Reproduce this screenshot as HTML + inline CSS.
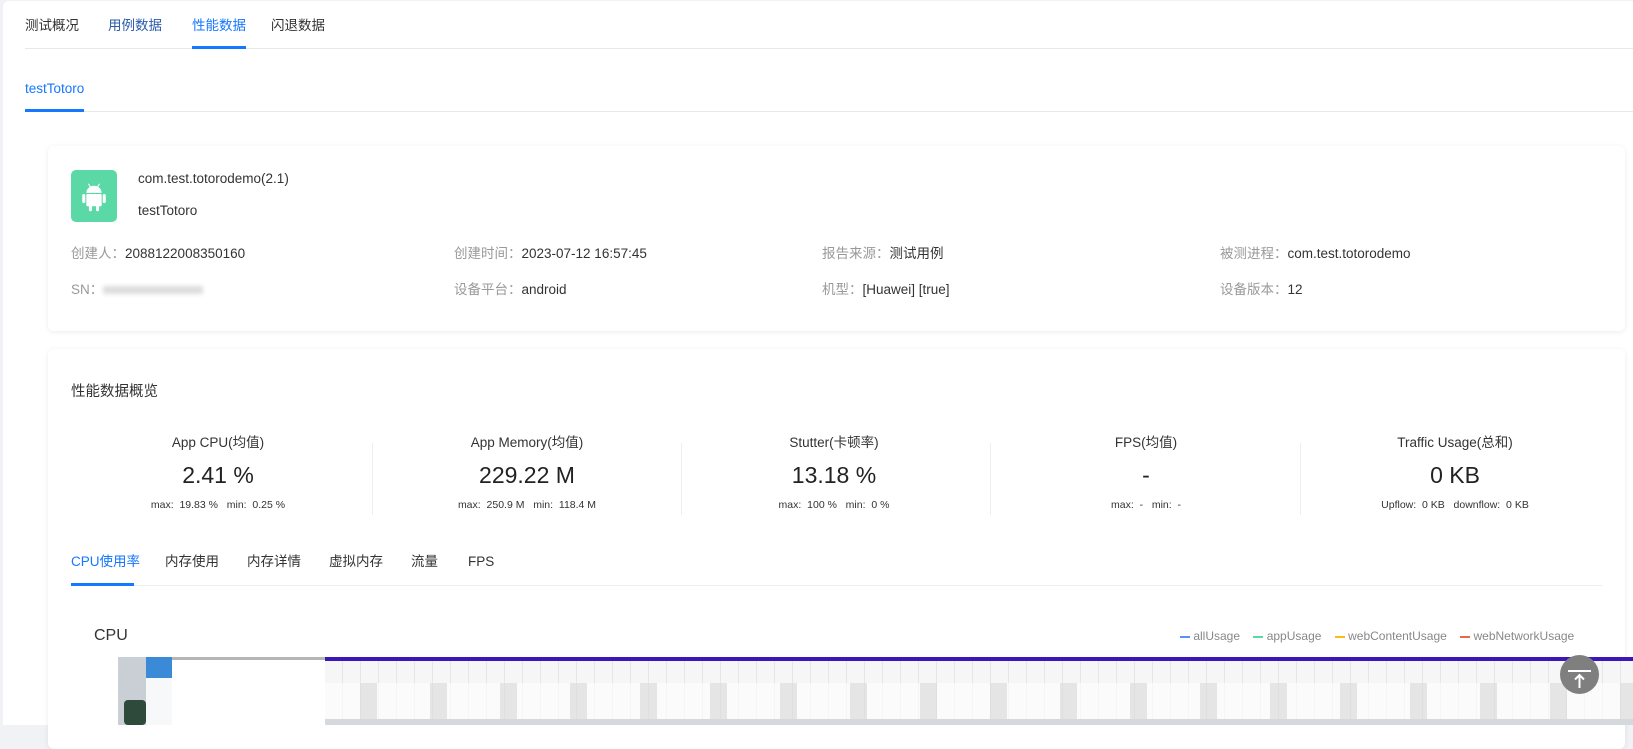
<!DOCTYPE html>
<html><head><meta charset="utf-8"><style>
*{box-sizing:border-box;margin:0;padding:0}
body{width:1633px;height:725px;overflow:hidden;background:#f0f2f5;font-family:"Liberation Sans","Noto Sans CJK SC",sans-serif;color:#333;font-size:13.5px}
.main{position:absolute;left:3px;top:1px;width:1630px;height:724px;background:#fff;border-radius:6px 0 0 0}
.abs{position:absolute;white-space:nowrap;line-height:18px}
.card{position:absolute;left:48px;width:1577px;background:#fff;border-radius:6px;box-shadow:0 1px 6px rgba(0,0,0,.08)}
.lab{color:#999}
.st{position:absolute;top:85px;width:310px;text-align:center}
.st .t{font-size:13.5px;color:#333;line-height:18px}
.st .v{font-size:23px;margin-top:9px;color:#222;line-height:28px}
.st .m{font-size:10.5px;margin-top:10px;color:#333}
.div{position:absolute;top:94px;width:1px;height:72px;background:#eee}
</style></head><body>
<div class="main"></div>
<div style="position:absolute;left:25px;right:0;top:48px;height:1px;background:#e8e8e8"></div>
<span class="abs" style="left:25px;top:17px">测试概况</span>
<span class="abs" style="left:108px;top:17px;color:#2a5caa">用例数据</span>
<span class="abs" style="left:192px;top:17px;color:#1677ff">性能数据</span>
<span class="abs" style="left:271px;top:17px">闪退数据</span>
<div style="position:absolute;left:192px;top:46px;width:54px;height:3px;background:#1677ff"></div>
<div style="position:absolute;left:25px;right:0;top:111px;height:1px;background:#e8e8e8"></div>
<span class="abs" style="left:25px;top:80px;color:#1677ff">testTotoro</span>
<div style="position:absolute;left:25px;top:109px;width:59px;height:3px;background:#1677ff"></div>

<div class="card" style="top:146px;height:185px">
<div style="position:absolute;left:23px;top:24px;width:46px;height:52px;background:#5ad8a6;border-radius:5px">
<svg width="46" height="52" viewBox="0 0 45 50"><g fill="#fff"><path d="M15 22a7.5 7 0 0 1 15 0z"/><rect x="15" y="23" width="15" height="12" rx="1"/><rect x="11" y="23" width="3" height="9" rx="1.5"/><rect x="31" y="23" width="3" height="9" rx="1.5"/><rect x="17.5" y="33" width="3" height="7" rx="1.5"/><rect x="24.5" y="33" width="3" height="7" rx="1.5"/></g><path d="M17 13l2 3M28 13l-2 3" stroke="#fff" stroke-width="1"/></svg>
</div>
<span class="abs" style="left:90px;top:24px">com.test.totorodemo(2.1)</span>
<span class="abs" style="left:90px;top:56px">testTotoro</span>
<span class="abs" style="left:23px;top:99px"><span class="lab">创建人：</span>2088122008350160</span>
<span class="abs" style="left:406px;top:99px"><span class="lab">创建时间：</span>2023-07-12 16:57:45</span>
<span class="abs" style="left:774px;top:99px"><span class="lab">报告来源：</span>测试用例</span>
<span class="abs" style="left:1172px;top:99px"><span class="lab">被测进程：</span>com.test.totorodemo</span>
<span class="abs" style="left:23px;top:135px"><span class="lab">SN：</span><span style="display:inline-block;width:100px;height:8px;background:#ddd;filter:blur(2px);vertical-align:middle"></span></span>
<span class="abs" style="left:406px;top:135px"><span class="lab">设备平台：</span>android</span>
<span class="abs" style="left:774px;top:135px"><span class="lab">机型：</span>[Huawei] [true]</span>
<span class="abs" style="left:1172px;top:135px"><span class="lab">设备版本：</span>12</span>
</div>

<div class="card" style="top:349px;height:400px">
<span class="abs" style="left:23px;top:34px;font-size:14.5px">性能数据概览</span>
<div class="st" style="left:15px"><div class="t">App CPU(均值)</div><div class="v">2.41 %</div><div class="m">max:&nbsp; 19.83 %&nbsp;&nbsp; min:&nbsp; 0.25 %</div></div>
<div class="div" style="left:324px"></div>
<div class="st" style="left:324px"><div class="t">App Memory(均值)</div><div class="v">229.22 M</div><div class="m">max:&nbsp; 250.9 M&nbsp;&nbsp; min:&nbsp; 118.4 M</div></div>
<div class="div" style="left:633px"></div>
<div class="st" style="left:631px"><div class="t">Stutter(卡顿率)</div><div class="v">13.18 %</div><div class="m">max:&nbsp; 100 %&nbsp;&nbsp; min:&nbsp; 0 %</div></div>
<div class="div" style="left:942px"></div>
<div class="st" style="left:943px"><div class="t">FPS(均值)</div><div class="v">-</div><div class="m">max:&nbsp; -&nbsp;&nbsp; min:&nbsp; -</div></div>
<div class="div" style="left:1252px"></div>
<div class="st" style="left:1252px"><div class="t">Traffic Usage(总和)</div><div class="v">0 KB</div><div class="m">Upflow:&nbsp; 0 KB&nbsp;&nbsp; downflow:&nbsp; 0 KB</div></div>
<div style="position:absolute;left:23px;width:1531px;top:236px;height:1px;background:#eee"></div>
<span class="abs" style="left:23px;top:204px;color:#1677ff">CPU使用率</span>
<div style="position:absolute;left:23px;top:234px;width:63px;height:3px;background:#1677ff"></div>
<span class="abs" style="left:117px;top:204px">内存使用</span>
<span class="abs" style="left:199px;top:204px">内存详情</span>
<span class="abs" style="left:281px;top:204px">虚拟内存</span>
<span class="abs" style="left:363px;top:204px">流量</span>
<span class="abs" style="left:420px;top:204px">FPS</span>
<span class="abs" style="left:46px;top:278px;font-size:16px;color:#333">CPU</span>
<div class="abs" style="left:1132px;top:278px;font-size:12px;color:#888">
<span style="display:inline-block;width:10px;height:2px;background:#5b8ff9;vertical-align:middle"></span> allUsage&nbsp;&nbsp;&nbsp;
<span style="display:inline-block;width:10px;height:2px;background:#5ad8a6;vertical-align:middle"></span> appUsage&nbsp;&nbsp;&nbsp;
<span style="display:inline-block;width:10px;height:2px;background:#f6bd16;vertical-align:middle"></span> webContentUsage&nbsp;&nbsp;&nbsp;
<span style="display:inline-block;width:10px;height:2px;background:#e8684a;vertical-align:middle"></span> webNetworkUsage</div>
</div>

<div style="position:absolute;left:118px;top:657px;width:28px;height:68px;background:#c9cfd4"></div>
<div style="position:absolute;left:124px;top:700px;width:22px;height:25px;background:#2d4a3a;border-radius:4px"></div>
<div style="position:absolute;left:146px;top:657px;width:26px;height:68px;background:#f6f8fa"></div>
<div style="position:absolute;left:146px;top:657px;width:26px;height:21px;background:#3a8ad8"></div>
<div style="position:absolute;left:172px;top:657px;width:153px;height:68px;background:#fff"></div>
<div style="position:absolute;left:172px;top:657px;width:153px;height:3px;background:#b5b5b5"></div>
<div style="position:absolute;left:325px;top:657px;width:1308px;height:68px;background:repeating-linear-gradient(90deg,#f6f6f6 0 17px,#e6e6e6 17px 18px)"></div>
<div style="position:absolute;left:325px;top:683px;width:1308px;height:36px;background:repeating-linear-gradient(90deg,#fff 0 35px,#dadada 35px 52px,#fff 52px 70px);opacity:.6"></div>
<div style="position:absolute;left:325px;top:657px;width:1308px;height:4px;background:#3b17b8"></div>
<div style="position:absolute;left:325px;top:719px;width:1308px;height:6px;background:#d5d8dc"></div>
<div style="position:absolute;left:1560px;top:655px;width:39px;height:39px;border-radius:50%;background:#7f7f7f">
<svg width="39" height="39"><path d="M8 16h23M19.5 20v13M15 24.5l4.5-4.5 4.5 4.5" stroke="#fff" stroke-width="2" fill="none"/></svg></div>
</body></html>
